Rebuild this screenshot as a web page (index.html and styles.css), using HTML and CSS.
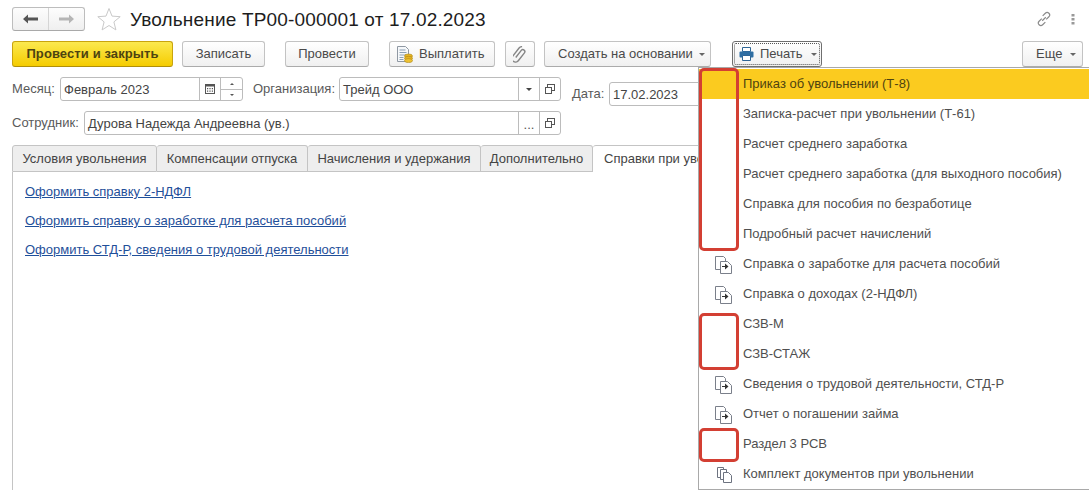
FILE: index.html
```html
<!DOCTYPE html>
<html lang="ru">
<head>
<meta charset="utf-8">
<title>Увольнение ТР00-000001</title>
<link rel="stylesheet" href="styles.css">
</head>
<body>
<div class="page">
  <header class="head">
    <div class="nav">
      <span class="nav-btn"><svg width="15" height="10" viewBox="0 0 15 10"><path d="M0 5 5 .5v3h10v3H5v3z" fill="#555"/></svg></span>
      <span class="nav-btn"><svg width="15" height="10" viewBox="0 0 15 10"><path d="M15 5 10 .5v3H0v3h10v3z" fill="#b5b5b5"/></svg></span>
    </div>
    <svg class="star" width="24" height="24" viewBox="0 0 24 24"><path d="M12 1.500l3 7.600 8.200.6-6.300 5.200 2 8-6.900-4.400-6.900 4.400 2-8L.8 9.700 9 9.100z" fill="#fff" stroke="#c9c9c9"/></svg>
    <h1 class="title">Увольнение ТР00-000001 от 17.02.2023</h1>
    <div class="head-tools">
      <svg width="16" height="16" viewBox="0 0 18 18" fill="none" stroke="#8a8a8a" stroke-width="1.300"><path d="M7.500 5.500l3-3a2.800 2.800 0 0 1 4 4l-3 3M10.500 12.500l-3 3a2.800 2.800 0 0 1-4-4l3-3M7 11l4-4"/></svg>
      <svg width="4" height="11" viewBox="0 0 4 11" fill="#999"><rect x="0.500" y="0" width="3" height="2.500"/><rect x="0.500" y="4" width="3" height="2.500"/><rect x="0.500" y="8" width="3" height="2.500"/></svg>
    </div>
  </header>

  <div class="toolbar">
    <button class="btn primary w-close">Провести и закрыть</button>
    <button class="btn w-save">Записать</button>
    <button class="btn w-post">Провести</button>
    <button class="btn w-pay">
      <svg width="16" height="17" viewBox="0 0 16 17"><path d="M.5.5h8l3 3v12h-11z" fill="#f6f8fa" stroke="#8f98a3"/><path d="M2.500 4h6M2.500 6.500h7M2.500 9h7M2.500 11.500h4M2.500 13.500h4" stroke="#8ba0b5"/><ellipse cx="11.500" cy="10" rx="4" ry="2" fill="#e6b422" stroke="#a98415" stroke-width=".6"/><ellipse cx="11.500" cy="12.300" rx="4" ry="2" fill="#e6b422" stroke="#a98415" stroke-width=".6"/><ellipse cx="11.500" cy="14.600" rx="4" ry="2" fill="#eec233" stroke="#a98415" stroke-width=".6"/></svg>
      Выплатить
    </button>
    <button class="btn w-clip">
      <svg width="14" height="17" viewBox="-7 -8.500 14 17" fill="none" stroke="#858585" stroke-width="1.400"><path transform="rotate(38)" d="M-1.500 5V-4a2 2 0 0 1 4 0V6a3.600 3.600 0 0 1-7.200 0V-4.500a5.200 4.500 0 0 1 1.500-3"/></svg>
    </button>
    <button class="btn w-create">Создать на основании<i class="caret"></i></button>
    <button class="btn w-print">
      <span class="focus">
        <svg width="15" height="14" viewBox="0 0 15 14"><path d="M3.500.5h8v4h-8z" fill="#fff" stroke="#2f6595"/><rect x=".5" y="4.500" width="14" height="6" rx="1" fill="#2f6ea3"/><path d="M3.500 8.500h8v5h-8z" fill="#fff" stroke="#2f6595"/></svg>
        Печать<i class="caret"></i>
      </span>
    </button>
    <button class="btn w-more">Еще<i class="caret"></i></button>
  </div>

  <div class="form">
    <div class="form-main">
      <div class="row">
        <label class="lbl month">Месяц:</label>
        <div class="field w-month"><span class="val">Февраль 2023</span>
          <span class="cell w21"><svg width="10" height="10" viewBox="0 0 10 10"><rect x=".5" y=".5" width="9" height="9" fill="#fff" stroke="#555"/><path d="M0 0h10v2.500H0z" fill="#555"/><path d="M2 4h1.200v1.200H2zM4.400 4h1.200v1.200H4.400zM6.800 4H8v1.200H6.800zM2 6.500h1.200v1.200H2zM4.400 6.500h1.200v1.200H4.400zM6.800 6.500H8v1.200H6.800z" fill="#555"/></svg></span>
          <span class="cell spin"><i class="up"></i><i class="down"></i></span>
        </div>
        <label class="lbl org">Организация:</label>
        <div class="field w-org"><span class="val">Трейд ООО</span>
          <span class="cell w21"><i class="caret dark"></i></span>
          <span class="cell w21"><svg width="10" height="10" viewBox="0 0 10 10" fill="#fff" stroke="#555"><rect x="2.500" y=".5" width="7" height="6"/><rect x=".5" y="3.500" width="6" height="6"/></svg></span>
        </div>
      </div>
      <div class="row">
        <label class="lbl emp">Сотрудник:</label>
        <div class="field w-emp"><span class="val">Дурова Надежда Андреевна (ув.)</span>
          <span class="cell w21 dots">...</span>
          <span class="cell w21"><svg width="10" height="10" viewBox="0 0 10 10" fill="#fff" stroke="#555"><rect x="2.500" y=".5" width="7" height="6"/><rect x=".5" y="3.500" width="6" height="6"/></svg></span>
        </div>
      </div>
    </div>
    <div class="form-date">
      <label class="lbl date-lbl">Дата:</label>
      <div class="field w-date"><span class="val">17.02.2023</span></div>
    </div>
  </div>

  <div class="tabs">
    <span class="tab t1">Условия увольнения</span>
    <span class="tab t2">Компенсации отпуска</span>
    <span class="tab t3">Начисления и удержания</span>
    <span class="tab t4">Дополнительно</span>
    <span class="tab active">Справки при увольнении</span>
  </div>
  <div class="pane">
    <a class="link">Оформить справку 2-НДФЛ</a>
    <a class="link">Оформить справку о заработке для расчета пособий</a>
    <a class="link">Оформить СТД-Р, сведения о трудовой деятельности</a>
  </div>
</div>

<div class="menu">
  <div class="item hot">Приказ об увольнении (Т-8)</div>
  <div class="item">Записка-расчет при увольнении (Т-61)</div>
  <div class="item">Расчет среднего заработка</div>
  <div class="item">Расчет среднего заработка (для выходного пособия)</div>
  <div class="item">Справка для пособия по безработице</div>
  <div class="item">Подробный расчет начислений</div>
  <div class="item"><svg class="ico" width="17" height="18" viewBox="0 0 17 18"><use href="#docgo"/></svg>Справка о заработке для расчета пособий</div>
  <div class="item"><svg class="ico" width="17" height="18" viewBox="0 0 17 18"><use href="#docgo"/></svg>Справка о доходах (2-НДФЛ)</div>
  <div class="item">СЗВ-М</div>
  <div class="item">СЗВ-СТАЖ</div>
  <div class="item"><svg class="ico" width="17" height="18" viewBox="0 0 17 18"><use href="#docgo"/></svg>Сведения о трудовой деятельности, СТД-Р</div>
  <div class="item"><svg class="ico" width="17" height="18" viewBox="0 0 17 18"><use href="#docgo"/></svg>Отчет о погашении займа</div>
  <div class="item">Раздел 3 РСВ</div>
  <div class="item"><svg class="ico kit" width="15" height="16" viewBox="0 0 15 16"><path d="M.5.5h6v10h-6z" fill="#fff" stroke="#6d7380"/><path d="M3.500 2.500h6v10h-6z" fill="#fff" stroke="#6d7380"/><path d="M6.500 5.500h5l3 3v7h-8z" fill="#fff" stroke="#6d7380"/></svg>Комплект документов при увольнении</div>
</div>
<span class="mark m1"></span>
<span class="mark m2"></span>
<span class="mark m3"></span>

<svg class="defs" width="0" height="0"><defs><g id="docgo"><path d="M.5 13.500V.5h8l2 2v3M.5 13.500h5" fill="none" stroke="#7a7f8a"/><path d="M5.500 5.500h7l4 4v8h-11z" fill="#fff" stroke="#7a7f8a"/><path d="M7 10h3V7.500l3.500 3-3.500 3V11H7z" fill="#333"/></g></defs></svg>
</body>
</html>
```
FILE: styles.css
```css
* { box-sizing: border-box; }
html, body { margin: 0; height: 100%; }
body {
  width: 1089px; height: 490px; overflow: hidden; position: relative;
  background: #fff; color: #4a4a4a;
  font: 13px/16px "Liberation Sans", Arial, sans-serif;
}
.page { padding: 7px 6px 0 12px; height: 490px; display: flex; flex-direction: column; }

.head { display: flex; align-items: center; height: 24px; }
.nav { display: flex; width: 73px; height: 24px; border: 1px solid #bdbdbd; border-bottom-color: #a9a9a9; border-radius: 3px; background: linear-gradient(#fdfdfd, #efefef); }
.nav-btn { flex: 1; display: flex; align-items: center; justify-content: center; }
.nav-btn + .nav-btn { border-left: 1px solid #d5d5d5; }
.star { margin-left: 12px; }
.title { margin: 2px 0 0 9px; font-size: 19px; font-weight: 400; line-height: 24px; color: #1d1d1d; letter-spacing: .17px; }
.head-tools { margin-left: auto; margin-right: 8px; display: flex; align-items: center; gap: 19px; }

.toolbar { display: flex; margin-top: 10px; height: 26px; }
.btn {
  height: 26px; padding: 0; display: flex; align-items: center; justify-content: center; flex: none;
  font: inherit; color: #4a4a4a;
  border: 1px solid #c3c3c3; border-bottom-color: #ababab; border-radius: 3px;
  background: linear-gradient(#fff, #f0f0f0);
}
.primary { border-color: #c9a40e #c9a40e #b08f08; background: linear-gradient(#fce94f, #f5cc00); color: #4d4310; font-weight: 700; letter-spacing: .1px; }
.w-close { width: 161px; }
.w-save { width: 83px; margin-left: 9px; }
.w-post { width: 84px; margin-left: 20px; }
.w-pay { width: 106px; margin-left: 20px; gap: 6px; justify-content: flex-start; padding-left: 7px; }
.w-clip { width: 30px; margin-left: 10px; }
.w-create { width: 167px; margin-left: 9px; justify-content: flex-start; padding-left: 13px; }
.w-print { width: 90px; margin-left: 21px; border-color: #6f6f6f; padding: 1px; }
.w-more { width: 61px; margin-left: auto; justify-content: flex-start; padding-left: 13px; }
.w-more .caret { margin-left: 8px; }
.focus { flex: 1; height: 100%; display: flex; align-items: center; gap: 6px; padding-left: 4px; border: 1px dotted #555; border-radius: 2px; }
.caret { display: inline-block; width: 0; height: 0; margin-left: 6px; border: 3px solid transparent; border-top: 3px solid #666; border-bottom: 0; }
.focus .caret { margin-left: 2px; }
.caret.dark { margin: 0; border-top-color: #444; }

.form { display: flex; margin-top: 10px; }
.form-main { display: flex; flex-direction: column; gap: 10px; width: 549px; }
.row { display: flex; align-items: center; height: 24px; }
.lbl { color: #5a5a5a; white-space: nowrap; }
.field { height: 24px; display: flex; align-items: stretch; border: 1px solid #bcbcbc; border-radius: 3px; background: #fff; color: #444; flex: none; }
.val { flex: 1; padding-left: 3px; line-height: 23px; white-space: nowrap; overflow: hidden; }
.cell { flex: none; display: flex; align-items: center; justify-content: center; border-left: 1px solid #bcbcbc; }
.w21 { width: 21px; }
.month { width: 48px; }
.w-month { width: 183px; }
.spin { width: 22px; flex-direction: column; position: relative; }
.spin i { width: 0; height: 0; border: 2px solid transparent; flex: none; }
.spin .up { border-bottom: 2px solid #555; border-top: 0; margin-bottom: 9px; }
.spin .down { border-top: 2px solid #555; border-bottom: 0; }
.spin::before { content: ""; position: absolute; left: 0; right: 0; top: 11px; border-top: 1px solid #bcbcbc; }
.org { width: 86px; margin-left: 10px; }
.w-org { width: 222px; }
.emp { width: 72px; }
.w-emp { width: 477px; }
.dots { color: #555; align-items: flex-end; padding-bottom: 2px; line-height: 14px; }
.form-date { display: flex; align-items: center; height: 24px; margin-top: 5px; margin-left: 11px; }
.date-lbl { width: 37px; }
.w-date { width: 100px; }

.tabs { display: flex; margin-top: 10px; height: 27px; flex: none; }
.tab { height: 27px; line-height: 26px; text-align: center; background: #eee; border: 1px solid #c4c4c4; border-left: 0; border-radius: 3px 3px 0 0; color: #444; flex: none; white-space: nowrap; }
.t1 { width: 145px; border-left: 1px solid #c4c4c4; }
.t2 { width: 151px; }
.t3 { width: 173px; }
.t4 { width: 112px; }
.active { width: 170px; background: #fff; border-bottom: 0; padding-left: 11px; text-align: left; overflow: hidden; }
.pane { flex: 1; margin-right: -6px; border-left: 1px solid #c4c4c4; padding: 12px 0 0 12px; display: flex; flex-direction: column; gap: 13px; align-items: flex-start; }
.link { color: #1f4f9a; text-decoration: underline; }

.menu { position: absolute; left: 698px; top: 67px; width: 391px; height: 423px; background: #fff; border: 1px solid #a9a9a9; border-right: 0; padding-top: 1px; }
.item { height: 30px; line-height: 30px; padding-left: 44px; position: relative; white-space: nowrap; color: #4f4f4f; }
.hot { background: #fbcb1f; color: #4f4310; }
.ico { position: absolute; left: 16px; top: 7px; }
.kit { left: 18px; top: 8px; }

.mark { position: absolute; left: 699px; width: 40px; border: 3px solid #d33f33; border-radius: 5px; }
.m1 { top: 68px; height: 183px; }
.m2 { top: 313px; height: 57px; }
.m3 { top: 428px; height: 34px; }
.defs { position: absolute; }
```
